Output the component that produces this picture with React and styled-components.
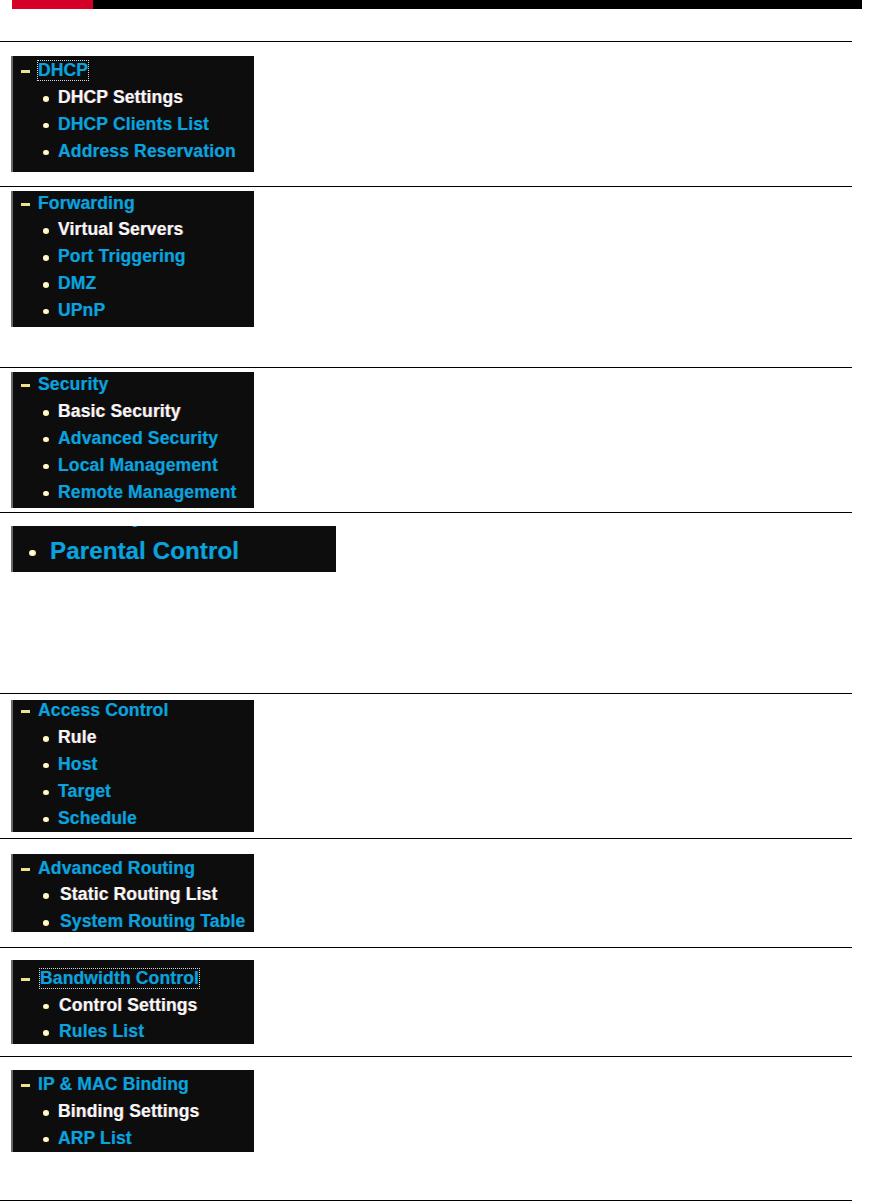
import React from "react";
import styled, { createGlobalStyle } from "styled-components";

const Global = createGlobalStyle`
  html, body { margin: 0; padding: 0; background: #ffffff; }
  body { font-family: "Liberation Sans", Arial, sans-serif; }
`;

const Page = styled.div`
  width: 875px;
  height: 1202px;
  overflow: hidden;
  background: #ffffff;
`;

const TopBar = styled.div`
  display: flex;
  height: 9px;
  margin: 0 13px 32px 12px;
`;

const RedTab = styled.div`
  width: 81px;
  background: #d50027;
`;

const BlackBar = styled.div`
  flex: 1;
  background: #000000;
`;

const Section = styled.section`
  width: 852px;
  border-top: 1px solid #000000;
  padding: ${(p) => p.$pt}px 0 ${(p) => p.$pb}px 11px;
  box-sizing: border-box;
  &:last-child { border-bottom: 1px solid #000000; }
`;

const Panel = styled.div`
  width: ${(p) => p.$w}px;
  height: ${(p) => p.$h}px;
  box-sizing: border-box;
  background: #0d0d0d;
  border-left: 2px solid #6a6a6a;
  overflow: hidden;
  display: flow-root;
`;

const List = styled.div`
  margin-top: ${(p) => p.$shift}px;
  font-size: ${(p) => p.$fs}px;
  line-height: ${(p) => p.$lh}px;
  font-weight: 700;
  letter-spacing: 0.15px;
  white-space: nowrap;
`;

const HeaderRow = styled.div`
  color: #0ba2dd;
  text-shadow: -0.5px 0 rgba(0, 70, 200, 0.45), 0.5px 0 rgba(0, 190, 150, 0.35);
`;

const Minus = styled.span`
  display: inline-block;
  width: 9px;
  height: 3px;
  margin: 0 ${(p) => 7 + p.$gap}px 0 8px;
  vertical-align: 3px;
  background: #efe38a;
`;

const Label = styled.span`
  display: inline-block;
  padding: 0 1px;
  line-height: 21px;
  outline: ${(p) => (p.$focus ? "1px dotted #d8d8d8" : "none")};
  outline-offset: -1px;
`;

const Item = styled.div`
  color: ${(p) => (p.$active ? "#f6f6f6" : "#0ba2dd")};
  text-shadow: ${(p) =>
    p.$active
      ? "-0.5px 0 rgba(90, 150, 255, 0.5), 0.6px 0 rgba(230, 130, 50, 0.6)"
      : "-0.5px 0 rgba(0, 70, 200, 0.45), 0.5px 0 rgba(0, 190, 150, 0.35)"};
`;

const Bullet = styled.span`
  display: inline-block;
  width: ${(p) => p.$size}px;
  height: ${(p) => p.$size}px;
  border-radius: 50%;
  margin-left: ${(p) => p.$ml}px;
  margin-right: ${(p) => p.$mr}px;
  vertical-align: ${(p) => p.$va}px;
  background: radial-gradient(circle at 45% 45%, #fffbe0 0 35%, #f5e26a 80%, #e6cf50 100%);
`;

const Ghost = styled.div`
  padding-left: 36px;
  line-height: 39px;
  color: #0ba2dd;
`;

const sections = [
  {
    pt: 14, pb: 14, h: 116, shift: 1.3, header: "DHCP", focus: true,
    items: ["DHCP Settings", "DHCP Clients List", "Address Reservation"],
  },
  {
    pt: 4, pb: 40, h: 136, shift: -1.4, header: "Forwarding",
    items: ["Virtual Servers", "Port Triggering", "DMZ", "UPnP"],
  },
  {
    pt: 4, pb: 4, h: 136, shift: -0.7, header: "Security",
    items: ["Basic Security", "Advanced Security", "Local Management", "Remote Management"],
  },
  { pt: 13, pb: 121, parental: true },
  {
    pt: 6, pb: 6, h: 132, shift: -2.7, header: "Access Control",
    items: ["Rule", "Host", "Target", "Schedule"],
  },
  {
    pt: 15, pb: 15, h: 78, shift: 0.6, header: "Advanced Routing",
    items: ["Static Routing List", "System Routing Table"], itemGap: 2,
  },
  {
    pt: 12, pb: 12, h: 84, shift: 4.9, header: "Bandwidth Control", focus: true, labelGap: 2,
    items: ["Control Settings", "Rules List"], itemGap: 1,
  },
  {
    pt: 13, pb: 48, h: 82, shift: 1.3, header: "IP & MAC Binding",
    items: ["Binding Settings", "ARP List"],
  },
];

function Menu({ s }) {
  return (
    <Panel $w={243} $h={s.h}>
      <List $shift={s.shift} $fs={17.5} $lh={26.8}>
        <HeaderRow>
          <Minus $gap={s.labelGap || 0} />
          <Label $focus={s.focus}>{s.header}</Label>
        </HeaderRow>
        {s.items.map((t, i) => (
          <Item key={t} $active={i === 0}>
            <Bullet $size={5.5} $ml={30.25} $mr={9.25 + (s.itemGap || 0)} $va={1.5} />
            {t}
          </Item>
        ))}
      </List>
    </Panel>
  );
}

function Parental() {
  return (
    <Panel $w={325} $h={46}>
      <List $shift={-31.8} $fs={24} $lh={35}>
        <Ghost>Security</Ghost>
        <Item>
          <Bullet $size={6.5} $ml={16} $mr={14.5} $va={3} />
          Parental Control
        </Item>
      </List>
    </Panel>
  );
}

export default function App() {
  return (
    <Page>
      <Global />
      <TopBar>
        <RedTab />
        <BlackBar />
      </TopBar>
      {sections.map((s, i) => (
        <Section key={i} $pt={s.pt} $pb={s.pb}>
          {s.parental ? <Parental /> : <Menu s={s} />}
        </Section>
      ))}
    </Page>
  );
}
